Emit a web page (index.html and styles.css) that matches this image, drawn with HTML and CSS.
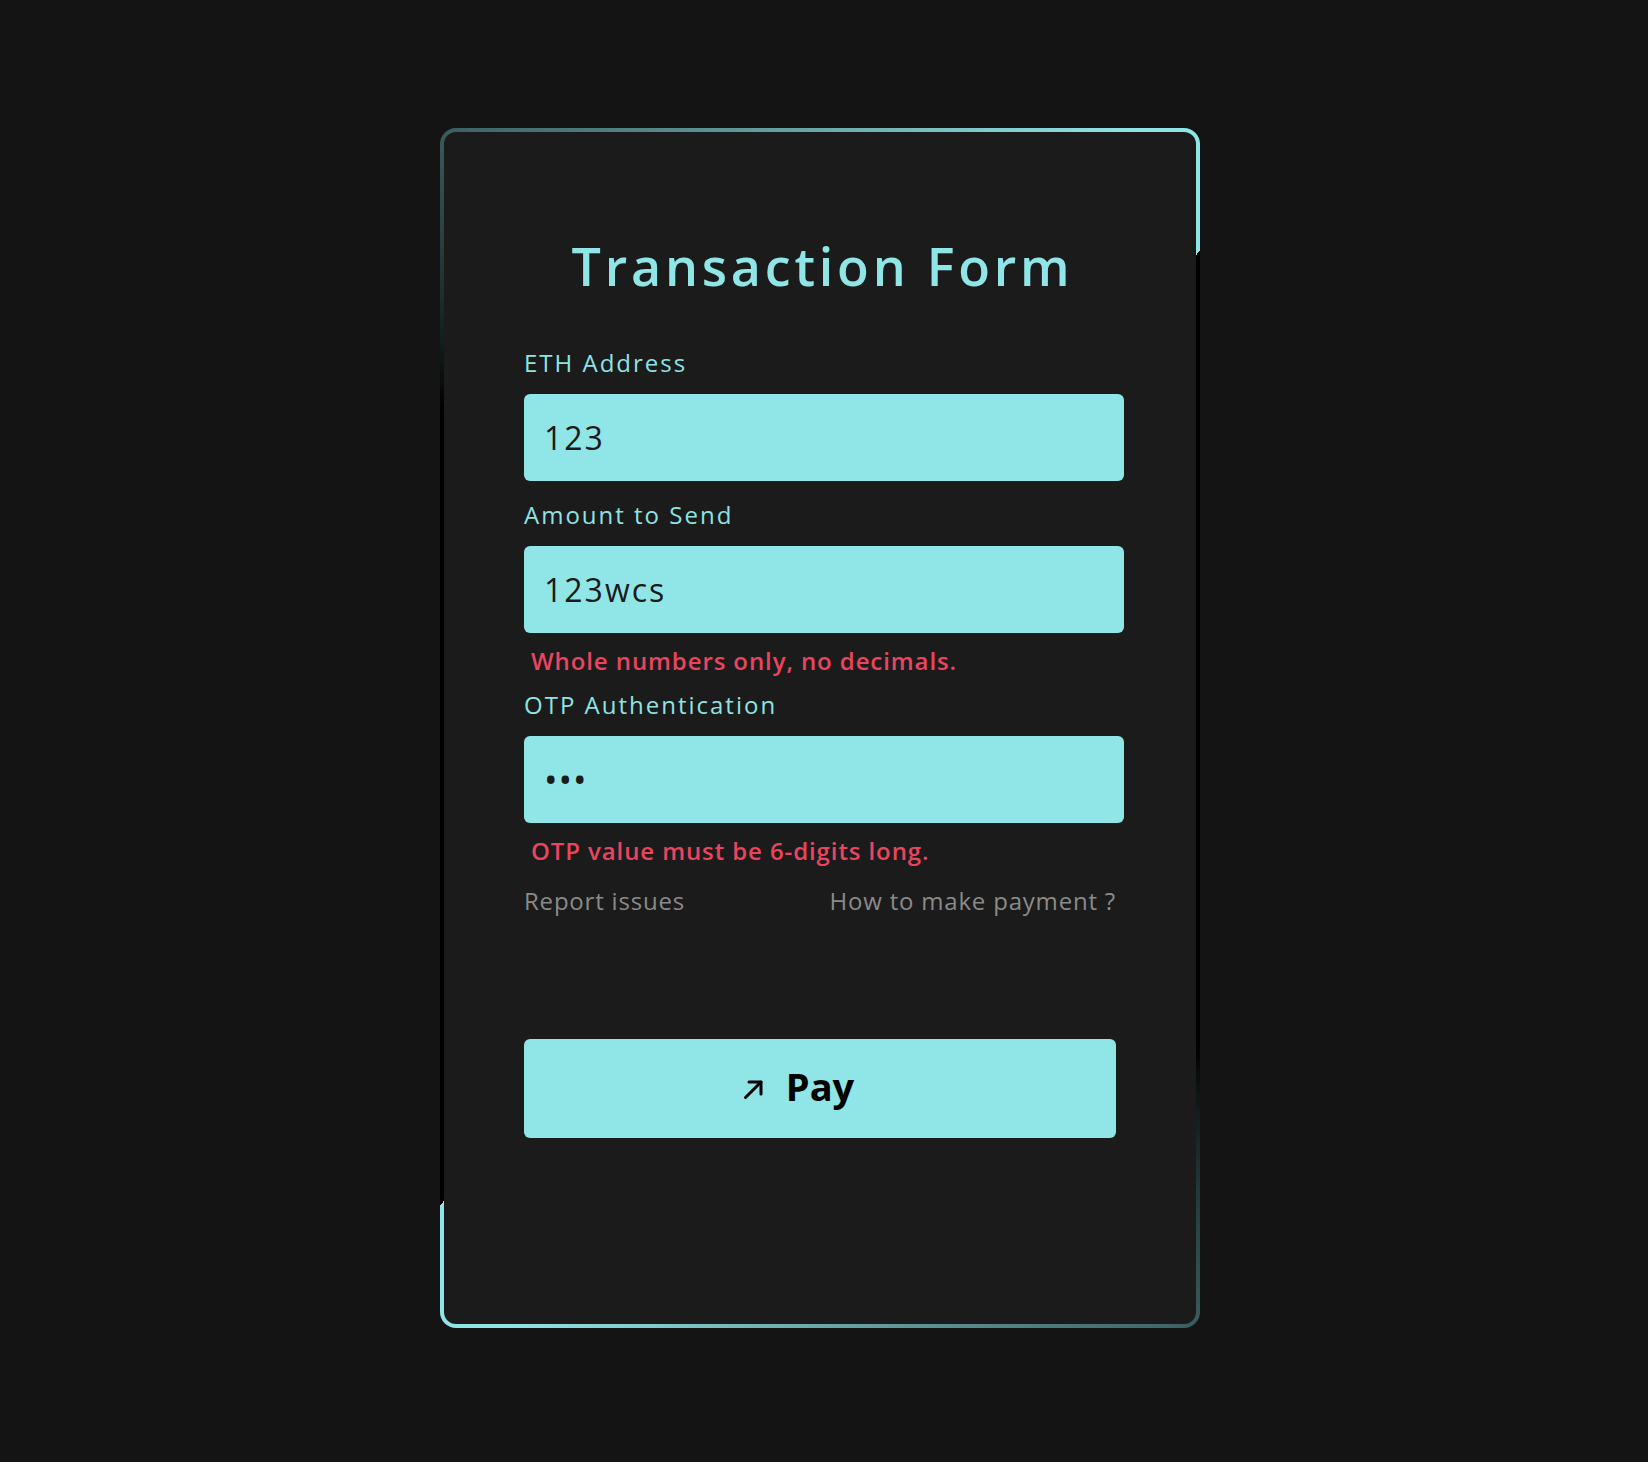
FILE: index.html
```html
<!DOCTYPE html>
<html lang="en">
<head>
  <meta charset="UTF-8" />
  <title>Transaction Form</title>
  <link rel="stylesheet" href="styles.css">
</head>
<body>
  <div class="page">
    <div class="frame">
      <form class="card" onsubmit="return false">
        <h1 class="title">Transaction Form</h1>

        <div class="field">
          <label for="address">ETH Address</label>
          <input id="address" type="text" value="123">
        </div>

        <div class="field">
          <label for="amount">Amount to Send</label>
          <input id="amount" type="text" value="123wcs">
          <p class="error">Whole numbers only, no decimals.</p>
        </div>

        <div class="field">
          <label for="otp">OTP Authentication</label>
          <input id="otp" type="password" value="123">
          <p class="error">OTP value must be 6-digits long.</p>
        </div>

        <div class="links">
          <a href="#">Report issues</a>
          <a href="#">How to make payment ?</a>
        </div>

        <button class="pay" type="submit">
          <svg class="pay-icon" viewBox="0 0 24 24" width="24" height="24" fill="none" stroke="currentColor" stroke-width="3" stroke-linecap="round" stroke-linejoin="round">
            <path d="M3.5 20.5 L19 5" />
            <path d="M7 5 H19 V17" />
          </svg>
          <span>Pay</span>
        </button>
      </form>
    </div>
  </div>
</body>
</html>
```

FILE: styles.css
```css
body {
  margin: 0;
  background: #141414;
  font-family: "Open Sans", "Noto Sans", sans-serif;
}

.page {
  display: flex;
  justify-content: center;
  padding: 128px 8px 0 0;
}

/* gradient border: cyan sweeps at top-right and bottom-left */
.frame {
  width: 760px;
  padding: 4px;
  box-sizing: border-box;
  border-radius: 16px;
  background:
    conic-gradient(from 130deg,
      rgba(144, 229, 230, 0) 0deg,
      rgba(144, 229, 230, 0.45) 20deg,
      #90e5e6 78deg,
      #90e5e6 88.5deg,
      rgba(144, 229, 230, 0) 88.5deg,
      rgba(144, 229, 230, 0) 180deg,
      rgba(144, 229, 230, 0.45) 200deg,
      #90e5e6 258deg,
      #90e5e6 268.5deg,
      rgba(144, 229, 230, 0) 268.5deg),
    #000;
}

.card {
  background: #1b1b1b;
  border-radius: 12px;
  padding: 103px 72px 186px 80px;
}

.title {
  margin: 0 -72px 48px -80px;
  padding-left: 5px;
  text-align: center;
  font-size: 52px;
  line-height: 62px;
  font-weight: 600;
  letter-spacing: 3.8px;
  color: #90e5e6;
}

.field + .field {
  margin-top: 16px;
}

.field label {
  display: block;
  margin-bottom: 13px;
  font-size: 24px;
  line-height: 36px;
  letter-spacing: 2px;
  color: #8fe3e4;
}

.field input {
  display: block;
  width: 100%;
  height: 87px;
  box-sizing: border-box;
  padding: 0 20px;
  border: none;
  border-radius: 6px;
  background: #90e5e6;
  color: #1b1b1b;
  font-family: inherit;
  font-size: 32px;
  letter-spacing: 2px;
  outline: none;
}

.field input[type="password"] {
  font-size: 36px;
  letter-spacing: 1px;
}

.error {
  margin: 15px 0 -3px 7px;
  font-size: 24px;
  line-height: 26px;
  font-weight: 600;
  letter-spacing: 0.9px;
  color: #e9455f;
}

.links {
  display: flex;
  justify-content: space-between;
  width: 592px;
  margin-top: 22px;
  font-size: 24px;
  line-height: 36px;
  letter-spacing: 0.8px;
}

.links a {
  color: #8a8a8a;
  text-decoration: none;
}

.pay {
  display: flex;
  align-items: center;
  justify-content: center;
  gap: 20px;
  width: 592px;
  height: 99px;
  margin-top: 120px;
  padding: 0 0 5px;
  border: none;
  border-radius: 6px;
  background: #90e5e6;
  color: #000;
  font-family: inherit;
  font-size: 38px;
  font-weight: 700;
  cursor: pointer;
}

.pay-icon {
  margin: 5px 0 0 -44px;
}
```
